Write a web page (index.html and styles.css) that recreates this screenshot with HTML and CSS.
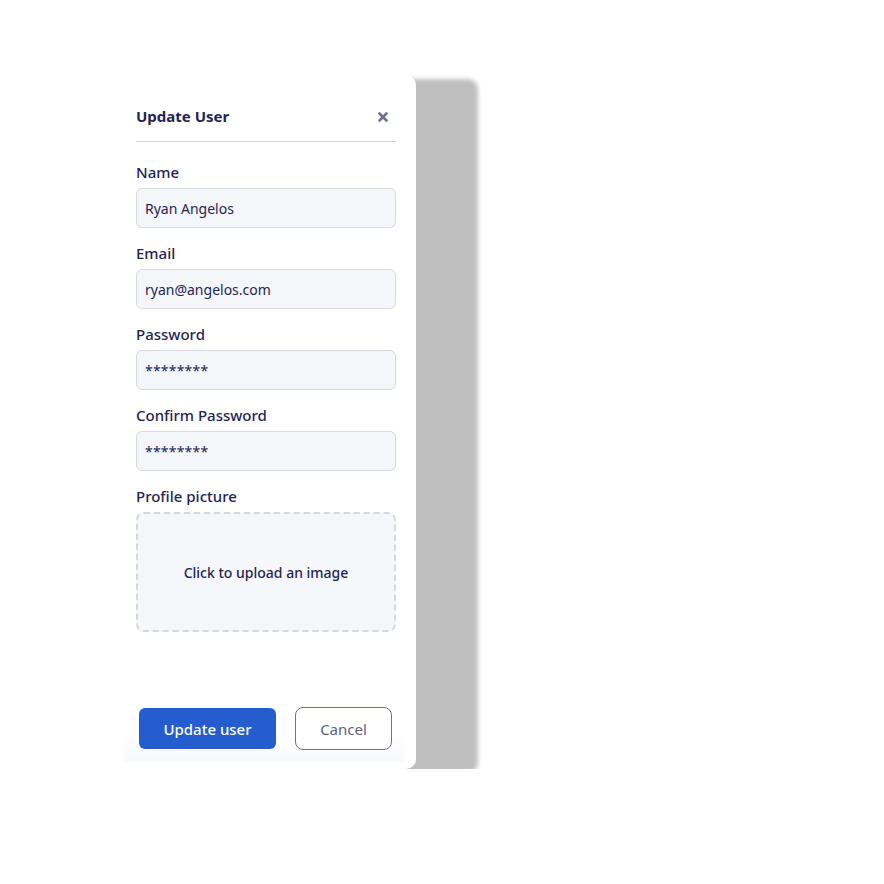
FILE: index.html
```html
<!DOCTYPE html>
<html lang="en">
<head>
<meta charset="utf-8">
<title>Update User</title>
<link rel="stylesheet" href="styles.css">
</head>
<body>
<div class="card">
  <div class="header">
    <h2 class="title">Update User</h2>
    <button class="close" aria-label="Close">
      <svg width="12" height="12" viewBox="0 0 12 12"><path d="M2.5 2.5 L9.5 9.5 M9.5 2.5 L2.5 9.5" stroke="#6b7191" stroke-width="2.6" stroke-linecap="round"/></svg>
    </button>
  </div>
  <div class="form">
    <div class="field">
      <label class="label">Name</label>
      <div class="input">Ryan Angelos</div>
    </div>
    <div class="field">
      <label class="label">Email</label>
      <div class="input">ryan@angelos.com</div>
    </div>
    <div class="field">
      <label class="label">Password</label>
      <div class="input pw">********</div>
    </div>
    <div class="field">
      <label class="label">Confirm Password</label>
      <div class="input pw">********</div>
    </div>
    <div class="field">
      <label class="label">Profile picture</label>
      <div class="upload">Click to upload an image</div>
    </div>
  </div>
  <div class="footer">
    <button class="btn primary">Update user</button>
    <button class="btn secondary">Cancel</button>
  </div>
</div>
</body>
</html>
```
FILE: styles.css
```css
* { box-sizing: border-box; }
html, body { margin: 0; padding: 0; background: #ffffff; }
body {
  font-family: "Noto Sans", "Open Sans", sans-serif;
  color: #1f2552;
}
.card {
  margin: 75px 0 0 116px;
  width: 300px;
  height: 694px;
  background: #ffffff;
  border-radius: 0 10px 10px 0;
  box-shadow: 62px 4px 4px rgba(0, 0, 0, 0.25);
  padding: 0 20px 7px 20px;
  display: flex;
  flex-direction: column;
}
.header {
  display: flex;
  align-items: center;
  justify-content: space-between;
  padding: 30px 0 14px 0;
  border-bottom: 1px solid #d0d3dc;
}
.title {
  margin: 0;
  font-size: 15px;
  line-height: 22px;
  font-weight: 700;
  color: #1f2552;
}
.close {
  border: 0;
  background: none;
  padding: 0;
  margin-right: 7px;
  margin-top: 2px;
  width: 12px;
  height: 12px;
  display: flex;
  align-items: center;
  justify-content: center;
}
.form {
  padding-top: 20px;
  display: flex;
  flex-direction: column;
  gap: 15px;
}
.field {
  display: flex;
  flex-direction: column;
  gap: 6px;
}
.label {
  font-size: 15px;
  line-height: 20px;
  font-weight: 550;
  color: #1f2552;
}
.input {
  height: 40px;
  border: 1px solid #d6d9e1;
  border-radius: 6px;
  background: #f5f6f9;
  padding: 0 8px;
  display: flex;
  align-items: center;
  font-size: 14px;
  color: #1f2552;
}
.input.pw { letter-spacing: 0.2px; }
.upload {
  height: 120px;
  border: 2px dashed #d5d8df;
  border-radius: 8px;
  background: #f6f7fa;
  display: flex;
  align-items: center;
  justify-content: center;
  font-size: 14px;
  font-weight: 500;
  color: #1f2552;
}
.footer {
  margin: auto -9px 0 -13px;
  padding: 13px 12px 12px 16px;
  display: flex;
  align-items: center;
  gap: 19px;
  background: linear-gradient(to bottom, rgba(248, 249, 253, 0) 55%, #f8f9fc 100%);
}
.btn {
  flex-shrink: 0;
  font-family: "Noto Sans", "Open Sans", sans-serif;
  font-size: 15px;
  border-radius: 6px;
  cursor: pointer;
}
.primary {
  width: 137px;
  height: 41px;
  background: #255dcf;
  color: #ffffff;
  border: 0;
  font-weight: 500;
}
.secondary {
  width: 97px;
  height: 43px;
  background: #ffffff;
  color: #5d6482;
  border: 1px solid #6c7293;
  border-radius: 8px;
}
```
